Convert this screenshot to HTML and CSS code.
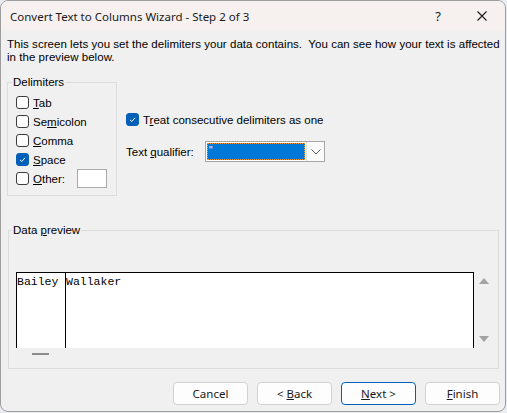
FILE: index.html
```html
<!DOCTYPE html>
<html lang="en">
<head>
    <meta charset="UTF-8">
    <title>Convert Text to Columns Wizard - Step 2 of 3</title>
    <link rel="stylesheet" href="styles.css">
</head>
<body>
    <div class="window">
        <div class="titlebar">
            <span class="title">Convert Text to Columns Wizard - Step 2 of 3</span>
            <span class="help">?</span>
            <span class="close">
                <svg width="10" height="10" viewBox="0 0 10 10"><path d="M0.5 0.5 L9.5 9.5 M9.5 0.5 L0.5 9.5" stroke="#1a1a1a" stroke-width="1.1" fill="none"/></svg>
            </span>
        </div>

        <div class="body">
            <p class="intro">This screen lets you set the delimiters your data contains.&nbsp; You can see how your text is affected<br>in the preview below.</p>

            <div class="middle">
                <fieldset class="group delims">
                    <legend>Delimiters</legend>
                    <label class="check"><span class="box"></span><span><u>T</u>ab</span></label>
                    <label class="check"><span class="box"></span><span>Se<u>m</u>icolon</span></label>
                    <label class="check"><span class="box"></span><span><u>C</u>omma</span></label>
                    <label class="check"><span class="box on"><svg width="11" height="11" viewBox="0 0 11 11"><path d="M3 5.8 L4.8 7.5 L8 3.8" stroke="#fff" stroke-width="1" fill="none"/></svg></span><span><u>S</u>pace</span></label>
                    <label class="check"><span class="box"></span><span><u>O</u>ther:</span><span class="other-input"></span></label>
                </fieldset>

                <div class="options">
                    <label class="check"><span class="box on"><svg width="11" height="11" viewBox="0 0 11 11"><path d="M3 5.8 L4.8 7.5 L8 3.8" stroke="#fff" stroke-width="1" fill="none"/></svg></span><span>T<u>r</u>eat consecutive delimiters as one</span></label>
                    <div class="qualifier">
                        <span class="qualifier-label">Text <u>q</u>ualifier:</span>
                        <div class="combo">
                            <span class="combo-value"><span class="focus">"</span></span>
                            <span class="combo-btn">
                                <svg width="10" height="6" viewBox="0 0 10 6"><path d="M0.5 0.5 L5 5 L9.5 0.5" stroke="#555" stroke-width="1" fill="none"/></svg>
                            </span>
                        </div>
                    </div>
                </div>
            </div>

            <fieldset class="group preview">
                <legend>Data <u>p</u>review</legend>
                <div class="preview-area">
                    <div class="grid">
                        <div class="col first">Bailey</div>
                        <div class="col">Wallaker</div>
                    </div>
                    <div class="vscroll">
                        <svg width="10" height="6" viewBox="0 0 10 6"><path d="M5 0 L10 6 L0 6 Z" fill="#a3a3a3"/></svg>
                        <svg width="10" height="6" viewBox="0 0 10 6"><path d="M0 0 L10 0 L5 6 Z" fill="#a3a3a3"/></svg>
                    </div>
                </div>
                <div class="hscroll"><span class="thumb"></span></div>
            </fieldset>

            <div class="buttons">
                <button type="button">Cancel</button>
                <button type="button">&lt; <u>B</u>ack</button>
                <button type="button" class="default"><u>N</u>ext &gt;</button>
                <button type="button"><u>F</u>inish</button>
            </div>
        </div>
    </div>
</body>
</html>
```

FILE: styles.css
```css
body {
    margin: 0;
    background: #eaeef3;
    font-family: "Liberation Sans", Arial, sans-serif;
    font-size: 11.5px;
    color: #000;
}
.window {
    box-sizing: border-box;
    width: 506px;
    height: 412px;
    border: 1px solid #9c9c9c;
    border-radius: 8px;
    background: #f0f0f0;
    overflow: hidden;
}
.titlebar {
    display: flex;
    align-items: center;
    height: 30px;
    background: #f6f0ef;
    font-family: "Noto Sans", sans-serif;
    font-size: 11.5px;
    color: #1a1a1a;
}
.title {
    flex: 1;
    padding-left: 9px;
}
.help {
    width: 20px;
    text-align: center;
    margin-right: 11px;
    font-size: 13px;
}
.close {
    width: 46px;
    display: flex;
    justify-content: center;
}
.body {
    padding: 0 5px 0 6px;
}
.intro {
    margin: 7px 0 0;
    line-height: 13px;
    letter-spacing: 0.04px;
}

.middle {
    display: flex;
    margin-top: 12px;
}
.group {
    border: 1px solid #dcdcdc;
    margin: 0;
    min-width: 0;
}
.group legend {
    padding: 0 1px;
    margin-left: -4px;
    line-height: 13px;
}
.delims {
    box-sizing: border-box;
    width: 110px;
    height: 120px;
    padding: 4px 0 0 8px;
}
.check {
    display: flex;
    align-items: center;
    height: 19px;
    gap: 4px;
}
.box {
    box-sizing: border-box;
    display: flex;
    align-items: center;
    justify-content: center;
    width: 13px;
    height: 13px;
    border: 1px solid #3b3b3b;
    border-radius: 3px;
    background: #fff;
    flex: none;
}
.box.on {
    border-color: #005fb8;
    background: #005fb8;
}
.other-input {
    box-sizing: border-box;
    width: 30px;
    height: 19px;
    margin-left: 8px;
    border: 1px solid #a9a9a9;
    background: #fff;
}

.options {
    margin-left: 9px;
    padding-top: 34px;
}
.qualifier {
    display: flex;
    align-items: center;
    margin-top: 12px;
}
.qualifier-label {
    width: 79px;
}
.combo {
    box-sizing: border-box;
    display: flex;
    width: 120px;
    height: 21px;
    border: 1px solid #a6a6a6;
    background: #fff;
}
.combo-value {
    flex: 1;
    padding: 1px;
    display: flex;
}
.focus {
    flex: 1;
    background: #0078d7;
    color: #fff;
    outline: 1px dotted #f59a2c;
    outline-offset: -1px;
    padding-left: 2px;
    line-height: 16px;
    font-size: 10px;
}
.combo-btn {
    width: 17px;
    border-left: 1px solid #e4e4e4;
    background: #fbfbfb;
    display: flex;
    align-items: center;
    justify-content: center;
}

.preview {
    box-sizing: border-box;
    width: 491px;
    height: 145px;
    margin: 28px 0 0 1px;
    padding: 35px 0 0 7px;
}
.preview-area {
    display: flex;
}
.grid {
    box-sizing: border-box;
    display: flex;
    width: 458px;
    height: 76px;
    border: 1px solid #000;
    border-bottom: none;
    background: #fff;
    font-family: "Liberation Mono", "Courier New", monospace;
    font-size: 11.5px;
    line-height: 18px;
}
.col.first {
    width: 48px;
    border-right: 1px solid #000;
}
.vscroll {
    width: 17px;
    display: flex;
    flex-direction: column;
    justify-content: space-between;
    align-items: center;
    padding: 6px 0;
    margin-left: 1px;
}
.hscroll {
    height: 11px;
    padding-left: 16px;
    display: flex;
    align-items: center;
}
.thumb {
    width: 17px;
    height: 2px;
    background: #8c8c8c;
}

.buttons {
    display: flex;
    justify-content: flex-end;
    gap: 9px;
    margin-top: 13px;
}
.buttons button {
    box-sizing: border-box;
    width: 75px;
    height: 23px;
    border: 1px solid #d1d1d1;
    border-radius: 4px;
    background: #fdfdfd;
    font-family: "Noto Sans", sans-serif;
    font-size: 11.5px;
    color: #1a1a1a;
    padding: 0;
}
.buttons button.default {
    border-color: #005fb8;
}
```
